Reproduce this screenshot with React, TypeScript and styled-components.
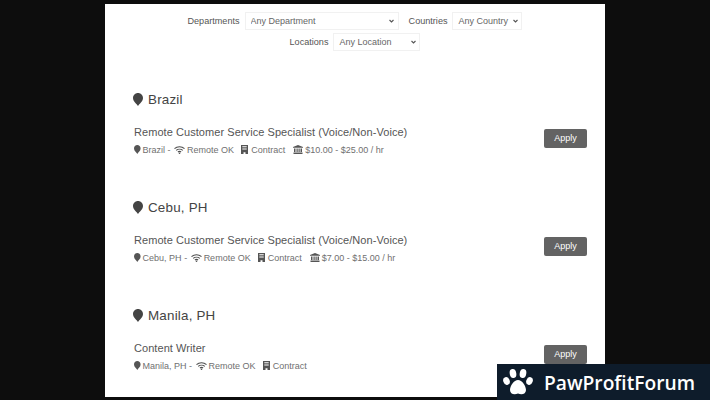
import React from "react";
import styled, { createGlobalStyle } from "styled-components";

const Global = createGlobalStyle`
  html, body { margin: 0; padding: 0; width: 710px; height: 400px; overflow: hidden; background: #0d0d0d; }
  body { font-family: "Liberation Sans", Arial, sans-serif; }
`;
const Page = styled.div`
  width: 710px; height: 400px; overflow: hidden; position: relative;
  padding: 4px 105px 3px; box-sizing: border-box;
`;
const Panel = styled.main`
  width: 500px; height: 393px; background: #fff; overflow: hidden; box-sizing: border-box; padding: 8px 18px 0 28px;
`;
const Filters = styled.form`
  display: flex; flex-direction: column; gap: 3px; margin: 0 -18px 36px -28px;
`;
const FilterRow = styled.div`
  display: flex; justify-content: center; align-items: center; height: 18px;
`;
const FilterLabel = styled.label<{ $gap?: number }>`
  font-size: 9.1px; color: #555; margin-left: ${p => p.$gap ?? 0}px; margin-right: 5px;
`;
const Select = styled.select<{ $w: number }>`
  appearance: none;
  width: ${p => p.$w}px; height: 18px; box-sizing: border-box; border: 1px solid #f1f1f1; border-radius: 0; outline: none;
  padding: 0 10px 0 5px; font: 9px "Liberation Sans", Arial, sans-serif; color: #666;
  background: #fff url("data:image/svg+xml,%3Csvg xmlns='http://www.w3.org/2000/svg' width='5' height='4' viewBox='0 0 5 4'%3E%3Cpath d='M.5 1 2.500 3 4.500 1' fill='none' stroke='%23555' stroke-width='1.100'/%3E%3C/svg%3E") no-repeat right 3.5px center;
`;
const Section = styled.section`
  height: 108px; box-sizing: border-box; padding-top: 3px;
`;
const Region = styled.h2`
  margin: 0; display: flex; align-items: center; gap: 5px; font-size: 13.4px; font-weight: 400; color: #444; height: 18px; letter-spacing: .2px;
`;
const Job = styled.div`
  display: flex; align-items: flex-start; justify-content: space-between; margin-top: 18px;
`;
const JobInfo = styled.div`display: flex; flex-direction: column; gap: 5px;`;
const JobTitle = styled.div`font-size: 11px; color: #555; height: 13px; line-height: 13px; letter-spacing: .06px; margin-left: 1px;`;
const Meta = styled.div`display: flex; align-items: center; font-size: 9px; color: #707070; height: 11px; margin-left: 1px;`;
const MetaItem = styled.span<{ $gap?: number }>`
  display: inline-flex; align-items: center; gap: 2px; margin-left: ${p => p.$gap ?? 0}px; white-space: pre;
`;
const Apply = styled.button`
  width: 43px; height: 19px; margin-top: 3px; border: 0; border-radius: 2px; background: #636363; color: #fff; font: 9px "Liberation Sans", Arial, sans-serif; padding: 0 0 1px;
`;
const Banner = styled.div`
  position: absolute; left: 497px; top: 364px; width: 213px; height: 36px; background: #0e1c2b; display: flex; align-items: center; gap: 11px; padding-left: 6px; box-sizing: border-box;
  color: #fff; font: 600 19.2px "Open Sans", sans-serif;
`;

const Pin = ({ w = 6.6, h = 9, fill = "#555" }: { w?: number; h?: number; fill?: string }) => (
  <svg width={w} height={h} viewBox="0 0 8 10" preserveAspectRatio="none"><path d="M4 10C3 8.400 0 6.600 0 3.900 0 1.700 1.800 0 4 0s4 1.700 4 3.900C8 6.600 5 8.400 4 10Z" fill={fill} /></svg>
);
const Wifi = () => (
  <svg width="11" height="8" viewBox="0 0 11 8"><path d="M.5 2.700C3.300.1 7.700.1 10.500 2.700M2.200 4.400C4 2.800 7 2.800 8.800 4.400M3.900 6C4.800 5.300 6.200 5.300 7.100 6" fill="none" stroke="#4d4d4d" strokeWidth="1.100" /><circle cx="5.500" cy="7.200" r=".8" fill="#4d4d4d" /></svg>
);
const Building = () => (
  <svg width="8" height="9" viewBox="0 0 8 9"><path d="M0 0h7v9H4.500V7.300h-2V9H0ZM1.300 1.200v1h4.400v-1ZM1.300 3.400v1h4.400v-1Z" fill="#555" fillRule="evenodd" /></svg>
);
const Bank = () => (
  <svg width="10" height="9" viewBox="0 0 10 9"><path d="M5 0 10 2v.8H0V2ZM1 3.400h1.500v3.600H1Zm2.500 0h1.200v3.600H3.500Zm2 0h1.200v3.600H5.500Zm2 0H9v3.600H7.500ZM.5 7.500h9V9h-9Z" fill="#555" /></svg>
);
const Paw = () => (
  <svg width="30" height="28" viewBox="0 0 30 28" fill="#fff"><ellipse cx="3.500" cy="13" rx="3.200" ry="4" transform="rotate(-20 3.500 13)" /><ellipse cx="10" cy="5.500" rx="3.300" ry="4.500" transform="rotate(-10 10 5.500)" /><ellipse cx="20" cy="5.500" rx="3.300" ry="4.500" transform="rotate(10 20 5.500)" /><ellipse cx="26.500" cy="13" rx="3.200" ry="4" transform="rotate(20 26.500 13)" /><path d="M15 12c4 0 8 6 8 10 0 4-4 5-8 3.600C11 27 7 26 7 22c0-4 4-10 8-10Z" /></svg>
);

const jobs = [
  { region: "Brazil", title: "Remote Customer Service Specialist (Voice/Non-Voice)", pay: "$10.00 - $25.00 / hr" },
  { region: "Cebu, PH", title: "Remote Customer Service Specialist (Voice/Non-Voice)", pay: "$7.00 - $15.00 / hr" },
  { region: "Manila, PH", title: "Content Writer", pay: "" },
];

export default function App() {
  return (
    <Page>
      <Global />
      <Panel>
        <Filters>
          <FilterRow>
            <FilterLabel>Departments</FilterLabel>
            <Select $w={154}><option>Any Department</option></Select>
            <FilterLabel $gap={10}>Countries</FilterLabel>
            <Select $w={70}><option>Any Country</option></Select>
          </FilterRow>
          <FilterRow>
            <FilterLabel>Locations</FilterLabel>
            <Select $w={87}><option>Any Location</option></Select>
          </FilterRow>
        </Filters>
        {jobs.map(j => (
          <Section key={j.region}>
            <Region><Pin w={10} h={13} fill="#444" />{j.region}</Region>
            <Job>
              <JobInfo>
                <JobTitle>{j.title}</JobTitle>
                <Meta>
                  <MetaItem><Pin />{j.region} - </MetaItem>
                  <MetaItem $gap={1}><Wifi />Remote OK</MetaItem>
                  <MetaItem $gap={7}><Building />Contract</MetaItem>
                  {j.pay && <MetaItem $gap={8}><Bank />{j.pay}</MetaItem>}
                </Meta>
              </JobInfo>
              <Apply>Apply</Apply>
            </Job>
          </Section>
        ))}
      </Panel>
      <Banner><Paw />PawProfitForum</Banner>
    </Page>
  );
}
